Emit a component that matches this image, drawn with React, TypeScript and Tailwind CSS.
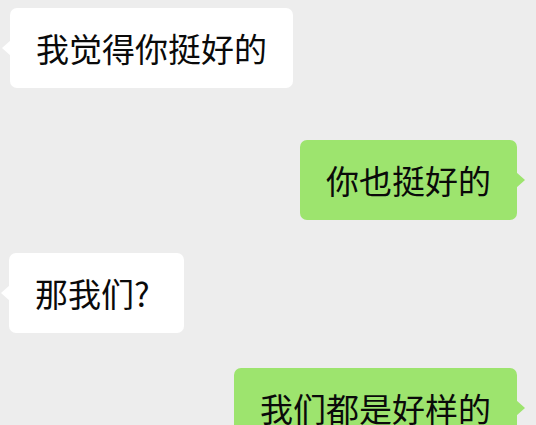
import React from 'react';

type Msg = { text: string; mine: boolean; className: string };

const messages: Msg[] = [
  { text: '我觉得你挺好的', mine: false, className: 'ml-[10px]' },
  { text: '你也挺好的', mine: true, className: 'mt-[52px] mr-[19px]' },
  { text: '那我们?', mine: false, className: 'mt-[33px] ml-[9px] pr-[34px]' },
  { text: '我们都是好样的', mine: true, className: 'mt-[35px] mr-[19px]' },
];

function Bubble({ text, mine, className }: Msg) {
  return (
    <div
      className={
        'relative flex h-[80px] shrink-0 items-center rounded-[7px] pl-[26px] pr-[26px] text-[33px] leading-none text-[#0a0a0a] ' +
        (mine ? 'self-end bg-[#9de46e] ' : 'self-start bg-white ') +
        className
      }
    >
      {mine ? (
        <span className="absolute right-[-8px] top-1/2 -translate-y-1/2 border-y-[8px] border-l-[9px] border-y-transparent border-l-[#9de46e]" />
      ) : (
        <span className="absolute left-[-8px] top-1/2 -translate-y-1/2 border-y-[8px] border-r-[9px] border-y-transparent border-r-white" />
      )}
      <span>{text}</span>
    </div>
  );
}

export default function App() {
  return (
    <div
      className="flex h-[425px] w-[536px] flex-col overflow-hidden bg-[#ededed] pt-[8px]"
      style={{ fontFamily: '"Noto Sans CJK SC", "Noto Sans", sans-serif' }}
    >
      {messages.map((m, i) => (
        <Bubble key={i} {...m} />
      ))}
    </div>
  );
}
